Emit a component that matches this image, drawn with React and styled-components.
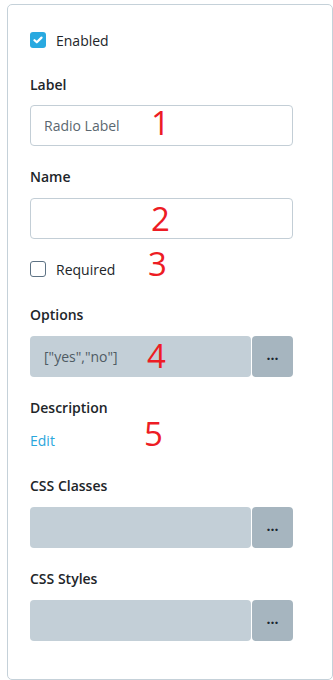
import React from 'react';
import styled, { createGlobalStyle } from 'styled-components';

const GlobalStyle = createGlobalStyle`
  html, body {
    margin: 0;
    padding: 0;
    background: #ffffff;
  }
  body {
    font-family: "Open Sans", "Noto Sans", sans-serif;
    color: #212529;
  }
`;

const Page = styled.div`
  position: relative;
  width: 333px;
  height: 680px;
  padding: 4px 0 0 7px;
  box-sizing: border-box;
  overflow: hidden;
`;

const Card = styled.div`
  box-sizing: border-box;
  width: 326px;
  height: 676px;
  border: 1px solid #c5d1d9;
  border-radius: 5px;
  padding: 25px 39px 0 22px;
  background: #ffffff;
`;

const CheckRow = styled.label`
  display: flex;
  align-items: center;
  gap: 10px;
  height: 20px;
  font-size: 14px;
  color: #212529;
  margin-bottom: ${(p) => p.$mb || 0}px;
`;

const Box = styled.span`
  box-sizing: border-box;
  width: 16px;
  height: 16px;
  border-radius: 3px;
  display: flex;
  align-items: center;
  justify-content: center;
  background: ${(p) => (p.$checked ? '#29a9e0' : '#ffffff')};
  border: ${(p) => (p.$checked ? 'none' : '1.5px solid #5d7284')};
`;

const Field = styled.div`
  margin-bottom: ${(p) => (p.$mb === undefined ? 21 : p.$mb)}px;
`;

const FieldLabel = styled.div`
  font-size: 14px;
  font-weight: 600;
  line-height: 20px;
  color: #212529;
  margin-bottom: ${(p) => p.$mb || 10}px;
`;

const TextInput = styled.div`
  box-sizing: border-box;
  height: 41px;
  border: 1px solid #c3ced6;
  border-radius: 4px;
  padding: 0 13px;
  display: flex;
  align-items: center;
  font-size: 14px;
  color: #5b6770;
`;

const Group = styled.div`
  display: flex;
  height: 41px;
  gap: 1px;
`;

const GroupInput = styled.div`
  flex: 1;
  background: #c3cfd7;
  border-radius: 4px;
  padding: 0 14px;
  display: flex;
  align-items: center;
  font-size: 14px;
  color: #4f5b64;
`;

const GroupButton = styled.div`
  width: 41px;
  background: #a6b5bf;
  border-radius: 4px;
  display: flex;
  align-items: center;
  justify-content: center;
  font-size: 14px;
  font-weight: 700;
  color: #1a2530;
  padding-bottom: 4px;
  box-sizing: border-box;
`;

const EditLink = styled.a`
  display: block;
  font-size: 14px;
  line-height: 20px;
  color: #2aa6dc;
  text-decoration: none;
  margin-bottom: 25px;
`;

const Marker = styled.span`
  position: absolute;
  left: ${(p) => p.$x}px;
  top: ${(p) => p.$y}px;
  font-family: "Open Sans", sans-serif;
  font-size: 33px;
  line-height: 33px;
  color: #ed1c24;
`;

const Check = () => (
  <svg width="10" height="8" viewBox="0 0 10 8">
    <path d="M1.5 4.2 L3.8 6.3 L8.5 1.6" fill="none" stroke="#fff" strokeWidth="2.2" strokeLinecap="round" strokeLinejoin="round" />
  </svg>
);

const AddonField = ({ label, value }) => (
  <Field>
    <FieldLabel $mb={11}>{label}</FieldLabel>
    <Group>
      <GroupInput>{value}</GroupInput>
      <GroupButton>...</GroupButton>
    </Group>
  </Field>
);

export default function App() {
  return (
    <>
      <GlobalStyle />
      <Page>
        <Card>
          <CheckRow $mb={25}>
            <Box $checked>
              <Check />
            </Box>
            Enabled
          </CheckRow>
          <Field>
            <FieldLabel>Label</FieldLabel>
            <TextInput>Radio Label</TextInput>
          </Field>
          <Field $mb={20}>
            <FieldLabel $mb={11}>Name</FieldLabel>
            <TextInput />
          </Field>
          <CheckRow $mb={26}>
            <Box />
            Required
          </CheckRow>
          <AddonField label="Options" value={'["yes","no"]'} />
          <Field $mb={0}>
            <FieldLabel $mb={13}>Description</FieldLabel>
            <EditLink href="#">Edit</EditLink>
          </Field>
          <AddonField label="CSS Classes" />
          <AddonField label="CSS Styles" />
        </Card>
        <Marker $x={151} $y={106}>1</Marker>
        <Marker $x={151} $y={202}>2</Marker>
        <Marker $x={148} $y={247}>3</Marker>
        <Marker $x={147} $y={339}>4</Marker>
        <Marker $x={144} $y={417}>5</Marker>
      </Page>
    </>
  );
}
